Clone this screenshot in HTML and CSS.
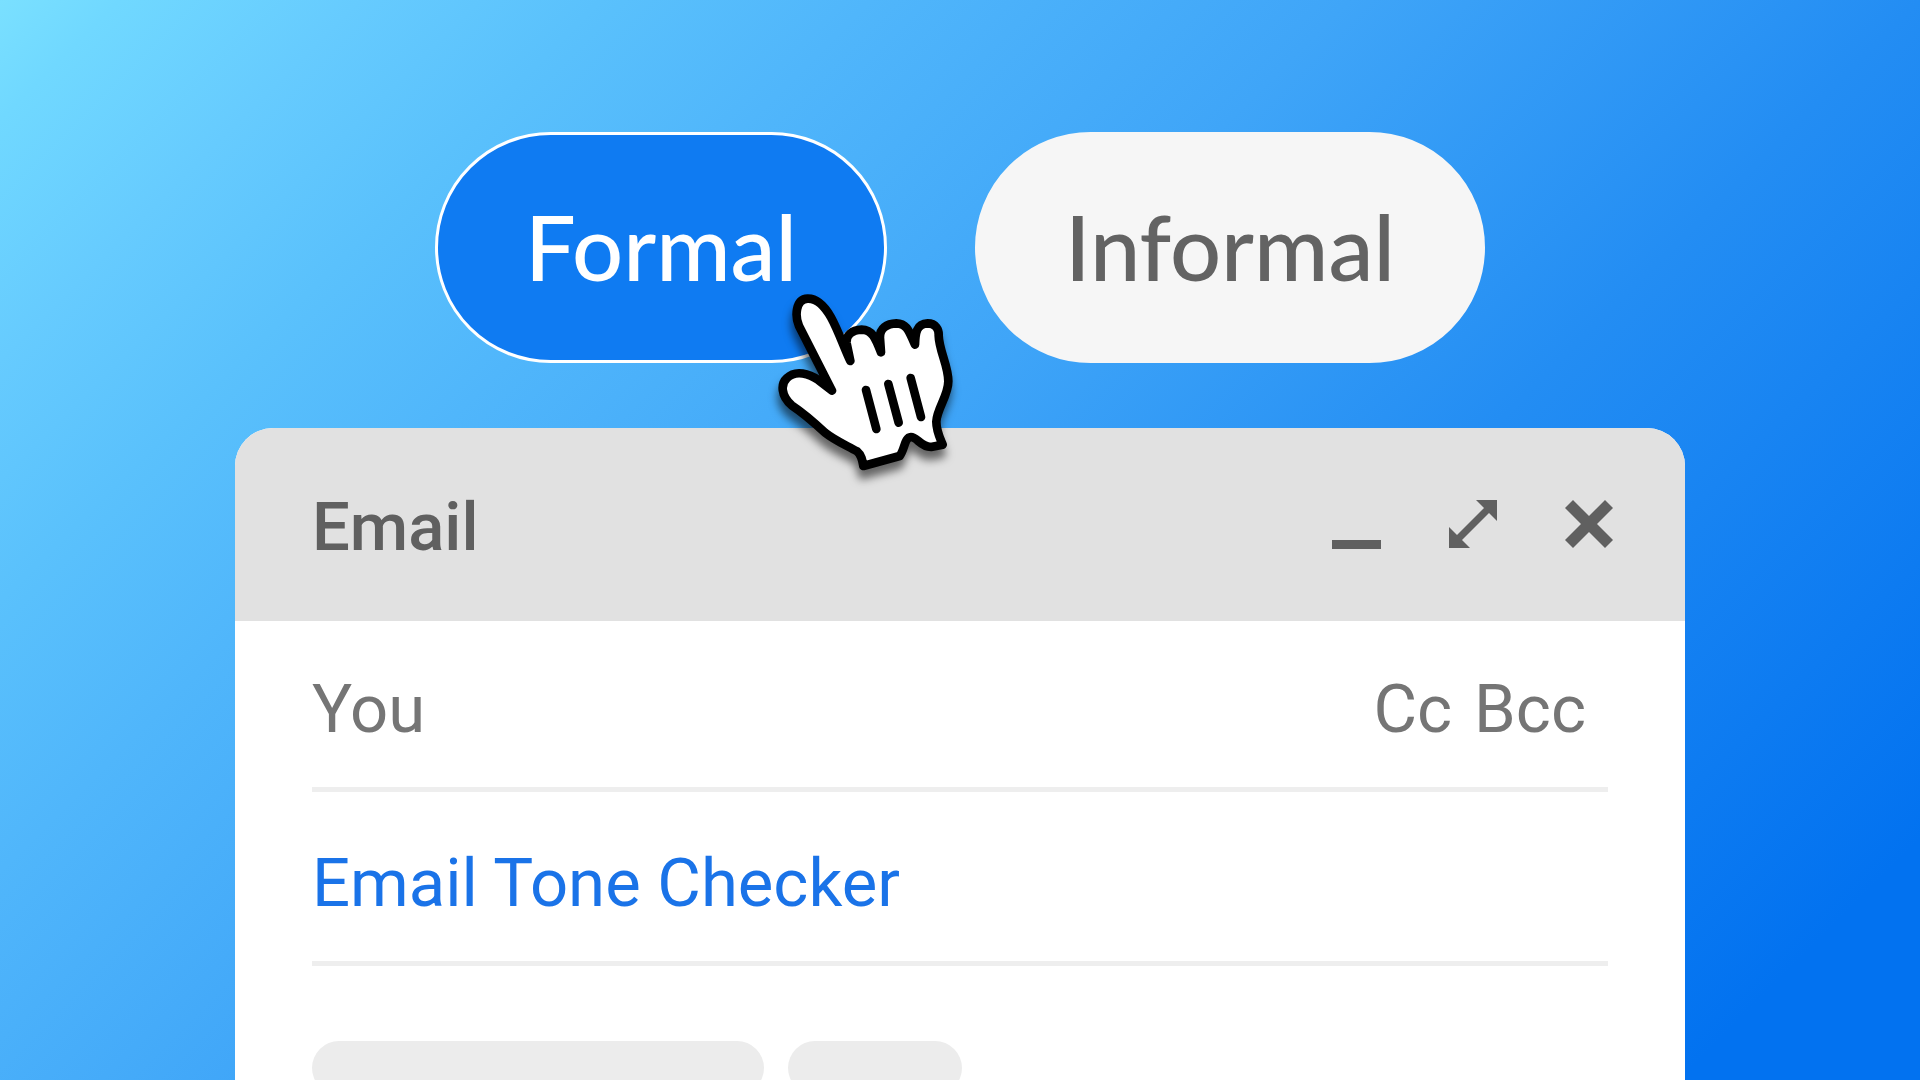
FILE: index.html
```html
<!DOCTYPE html>
<html lang="en">
<head>
<meta charset="utf-8">
<meta name="viewport" content="width=device-width, initial-scale=1">
<title>Email Tone Checker</title>
<link rel="stylesheet" href="styles.css">
</head>
<body>
<main class="stage">
  <div class="tones" role="group" aria-label="Tone">
    <div class="tone-wrap">
      <button type="button" class="tone tone-active" aria-pressed="true">Formal</button>
      <svg class="cursor" viewBox="0 0 630 630" aria-hidden="true">
        <path class="cursor-hand" d="M213 332L114 138C102 110 102 58 140 56C172 55 194 84 210 112C232 152 248 200 268 243L257 190C254 166 272 150 302 149C334 149 344 176 360 217L357 175C355 145 378 131 406 130C440 130 446 160 462 194C463 160 466 131 500 130C524 130 534 148 533 166C534 212 562 256 562 304C562 348 528 385 526 425C526 452 536 472 545 494L510 501C478 500 468 471 450 471C430 472 432 508 416 528L307 558C304 540 302 526 288 514C256 496 222 482 192 458C160 428 122 396 92 376C60 348 58 312 78 294C104 268 146 282 172 300Z"/>
        <path class="cursor-line" d="M315 330L346 447M382 312L413 428M449 294L480 411"/>
      </svg>
    </div>
    <button type="button" class="tone" aria-pressed="false">Informal</button>
  </div>

  <form class="mail">
    <header class="mail-head">
      <h1 class="mail-title">Email</h1>
      <div class="mail-tools">
        <button type="button" class="tool" aria-label="Minimize">
          <svg class="tool-icon" viewBox="0 0 48 48"><path d="M-1 40h49v9H-1z"/></svg>
        </button>
        <button type="button" class="tool" aria-label="Full screen">
          <svg class="tool-icon" viewBox="0 0 48 48"><path d="M27 0h21v21l-8-8-27 27 8 8H0V27l8 8 27-27z"/></svg>
        </button>
        <button type="button" class="tool" aria-label="Close">
          <svg class="tool-icon" viewBox="0 0 48 48"><path d="M8 0l16 16L40 0l8 8-16 16 16 16-8 8-16-16L8 48l-8-8 16-16L0 8z"/></svg>
        </button>
      </div>
    </header>
    <div class="mail-body">
      <div class="field">
        <input class="field-input" type="text" value="You" aria-label="To">
        <div class="copies">
          <button type="button" class="copy">Cc</button>
          <button type="button" class="copy">Bcc</button>
        </div>
      </div>
      <div class="field">
        <input class="field-input field-subject" type="text" value="Email Tone Checker" aria-label="Subject">
      </div>
      <div class="skeleton">
        <span class="bar bar-long"></span>
        <span class="bar bar-short"></span>
      </div>
    </div>
  </form>
</main>
</body>
</html>
```
FILE: styles.css
```css
* {
  box-sizing: border-box;
}

body {
  margin: 0;
  font-family: Roboto, "Liberation Sans", sans-serif;
}

button,
input {
  margin: 0;
  padding: 0;
  border: 0;
  background: none;
  color: inherit;
  font: inherit;
}

.stage {
  display: flex;
  flex-direction: column;
  align-items: center;
  gap: 65px;
  height: 100vh;
  padding-top: 132px;
  overflow: hidden;
  background: linear-gradient(135deg, #7ae0ff 0%, #70d8ff 4%, #66cbfe 12%, #5ac1fc 20%, #50b6fb 29%, #3fa5f8 45%, #238df3 64%, #0272f0 92%);
}

.tones {
  display: flex;
  gap: 88px;
}

.tone-wrap {
  position: relative;
}

.tone {
  padding: 59px 87px 62px;
  border: 3px solid #f6f6f6;
  border-radius: 116px;
  background: #f6f6f6;
  color: #636363;
  font-family: Lato, sans-serif;
  font-size: 90px;
  font-weight: 500;
  line-height: 104px;
}

.tone-active {
  border-color: #fff;
  background: #0f7bf2;
  color: #fff;
}

.cursor {
  position: absolute;
  right: -84px;
  bottom: -127px;
  z-index: 1;
  width: 210px;
  height: 210px;
  overflow: visible;
  filter: drop-shadow(-1px 9px 4px rgba(0, 0, 0, 0.55));
  pointer-events: none;
}

.cursor-hand {
  fill: #fff;
  stroke: #000;
  stroke-width: 26;
  stroke-linejoin: round;
}

.cursor-line {
  fill: none;
  stroke: #000;
  stroke-width: 26;
  stroke-linecap: round;
}

.mail {
  flex: 1 0 auto;
  display: flex;
  flex-direction: column;
  width: calc(100% - 64px);
  max-width: 1450px;
  border-radius: 38px 38px 0 0;
  background: #fff;
  overflow: hidden;
}

.mail-head {
  display: flex;
  align-items: center;
  justify-content: space-between;
  padding: 53px 72px 54px 77px;
  background: #e1e1e1;
  color: #606060;
}

.mail-title {
  margin: 0;
  padding-top: 6px;
  font-size: 67px;
  font-weight: 500;
  line-height: 80px;
}

.mail-tools {
  display: flex;
  gap: 68px;
}

.tool-icon {
  display: block;
  width: 48px;
  height: 48px;
  fill: currentColor;
  overflow: visible;
}

.mail-body {
  padding: 0 77px;
}

.field {
  display: flex;
  align-items: center;
  padding: 48px 22px 38px 0;
  border-bottom: 5px solid #eee;
  color: #757575;
  font-size: 67px;
  line-height: 80px;
}

.field + .field {
  padding-top: 51px;
}

.field-input {
  flex: 1;
  min-width: 0;
  height: 80px;
  outline: 0;
}

.field-subject {
  color: #1a73e8;
}

.copies {
  display: flex;
  gap: 22px;
}

.skeleton {
  display: flex;
  gap: 24px;
  padding-top: 75px;
}

.bar {
  height: 54px;
  border-radius: 27px;
  background: #ececec;
}

.bar-long {
  width: 452px;
}

.bar-short {
  width: 174px;
}
```
